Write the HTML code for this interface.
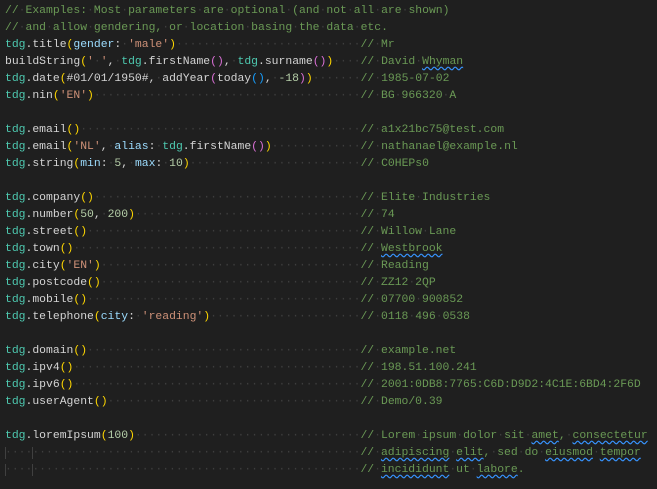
<!DOCTYPE html>
<html><head><meta charset="utf-8"><style>
html,body{margin:0;padding:0;background:#1f1f1f;width:657px;height:489px;overflow:hidden}
pre{margin:0;padding:3px 0 0 5px;font-family:"Liberation Mono",monospace;font-size:11.4px;line-height:17px;color:#d4d4d4;white-space:pre}
.c{color:#6a9955}.t{color:#4ec9b0}.s{color:#ce9178}.n{color:#b5cea8}.v{color:#9cdcfe}
.a{color:#ffd700}.b{color:#da70d6}.d{color:#3e3e3e}
.w{text-decoration:underline wavy #3794ff;text-underline-offset:2px}
.g{box-shadow:inset 1px 0 0 #404040}
i{font-style:normal}
</style></head><body><pre><span class="c">//<i class="d">·</i>Examples:<i class="d">·</i>Most<i class="d">·</i>parameters<i class="d">·</i>are<i class="d">·</i>optional<i class="d">·</i>(and<i class="d">·</i>not<i class="d">·</i>all<i class="d">·</i>are<i class="d">·</i>shown)</span>
<span class="c">//<i class="d">·</i>and<i class="d">·</i>allow<i class="d">·</i>gendering,<i class="d">·</i>or<i class="d">·</i>location<i class="d">·</i>basing<i class="d">·</i>the<i class="d">·</i>data<i class="d">·</i>etc.</span>
<span class="t">tdg</span>.title<span class="a">(</span><span class="v">gender</span>:<i class="d">·</i><span class="s">'male'</span><span class="a">)</span><i class="d">···························</i><span class="c">//<i class="d">·</i>Mr</span>
buildString<span class="a">(</span><span class="s">'<i class="d">·</i>'</span>,<i class="d">·</i><span class="t">tdg</span>.firstName<span class="b">()</span>,<i class="d">·</i><span class="t">tdg</span>.surname<span class="b">()</span><span class="a">)</span><i class="d">····</i><span class="c">//<i class="d">·</i>David<i class="d">·</i><span class="w">Whyman</span></span>
<span class="t">tdg</span>.date<span class="a">(</span>#01/01/1950#,<i class="d">·</i>addYear<span class="b">(</span>today<span style="color:#179fff">()</span>,<i class="d">·</i><span class="n">-18</span><span class="b">)</span><span class="a">)</span><i class="d">·······</i><span class="c">//<i class="d">·</i>1985-07-02</span>
<span class="t">tdg</span>.nin<span class="a">(</span><span class="s">'EN'</span><span class="a">)</span><i class="d">·······································</i><span class="c">//<i class="d">·</i>BG<i class="d">·</i>966320<i class="d">·</i>A</span>

<span class="t">tdg</span>.email<span class="a">()</span><i class="d">·········································</i><span class="c">//<i class="d">·</i>a1x21bc75@test.com</span>
<span class="t">tdg</span>.email<span class="a">(</span><span class="s">'NL'</span>,<i class="d">·</i><span class="v">alias</span>:<i class="d">·</i><span class="t">tdg</span>.firstName<span class="b">()</span><span class="a">)</span><i class="d">·············</i><span class="c">//<i class="d">·</i>nathanael@example.nl</span>
<span class="t">tdg</span>.string<span class="a">(</span><span class="v">min</span>:<i class="d">·</i><span class="n">5</span>,<i class="d">·</i><span class="v">max</span>:<i class="d">·</i><span class="n">10</span><span class="a">)</span><i class="d">·························</i><span class="c">//<i class="d">·</i>C0HEPs0</span>

<span class="t">tdg</span>.company<span class="a">()</span><i class="d">·······································</i><span class="c">//<i class="d">·</i>Elite<i class="d">·</i>Industries</span>
<span class="t">tdg</span>.number<span class="a">(</span><span class="n">50</span>,<i class="d">·</i><span class="n">200</span><span class="a">)</span><i class="d">·································</i><span class="c">//<i class="d">·</i>74</span>
<span class="t">tdg</span>.street<span class="a">()</span><i class="d">········································</i><span class="c">//<i class="d">·</i>Willow<i class="d">·</i>Lane</span>
<span class="t">tdg</span>.town<span class="a">()</span><i class="d">··········································</i><span class="c">//<i class="d">·</i><span class="w">Westbrook</span></span>
<span class="t">tdg</span>.city<span class="a">(</span><span class="s">'EN'</span><span class="a">)</span><i class="d">······································</i><span class="c">//<i class="d">·</i>Reading</span>
<span class="t">tdg</span>.postcode<span class="a">()</span><i class="d">······································</i><span class="c">//<i class="d">·</i>ZZ12<i class="d">·</i>2QP</span>
<span class="t">tdg</span>.mobile<span class="a">()</span><i class="d">········································</i><span class="c">//<i class="d">·</i>07700<i class="d">·</i>900852</span>
<span class="t">tdg</span>.telephone<span class="a">(</span><span class="v">city</span>:<i class="d">·</i><span class="s">'reading'</span><span class="a">)</span><i class="d">······················</i><span class="c">//<i class="d">·</i>0118<i class="d">·</i>496<i class="d">·</i>0538</span>

<span class="t">tdg</span>.domain<span class="a">()</span><i class="d">········································</i><span class="c">//<i class="d">·</i>example.net</span>
<span class="t">tdg</span>.ipv4<span class="a">()</span><i class="d">··········································</i><span class="c">//<i class="d">·</i>198.51.100.241</span>
<span class="t">tdg</span>.ipv6<span class="a">()</span><i class="d">··········································</i><span class="c">//<i class="d">·</i>2001:0DB8:7765:C6D:D9D2:4C1E:6BD4:2F6D</span>
<span class="t">tdg</span>.userAgent<span class="a">()</span><i class="d">·····································</i><span class="c">//<i class="d">·</i>Demo/0.39</span>

<span class="t">tdg</span>.loremIpsum<span class="a">(</span><span class="n">100</span><span class="a">)</span><i class="d">·································</i><span class="c">//<i class="d">·</i>Lorem<i class="d">·</i>ipsum<i class="d">·</i>dolor<i class="d">·</i>sit<i class="d">·</i><span class="w">amet</span>,<i class="d">·</i><span class="w">consectetur</span></span>
<i class="d"><span class="g">····</span><span class="g">················································</span></i><span class="c">//<i class="d">·</i><span class="w">adipiscing</span><i class="d">·</i><span class="w">elit</span>,<i class="d">·</i>sed<i class="d">·</i>do<i class="d">·</i><span class="w">eiusmod</span><i class="d">·</i><span class="w">tempor</span></span>
<i class="d"><span class="g">····</span><span class="g">················································</span></i><span class="c">//<i class="d">·</i><span class="w">incididunt</span><i class="d">·</i>ut<i class="d">·</i><span class="w">labore</span>.</span>
</pre>
</body></html>
